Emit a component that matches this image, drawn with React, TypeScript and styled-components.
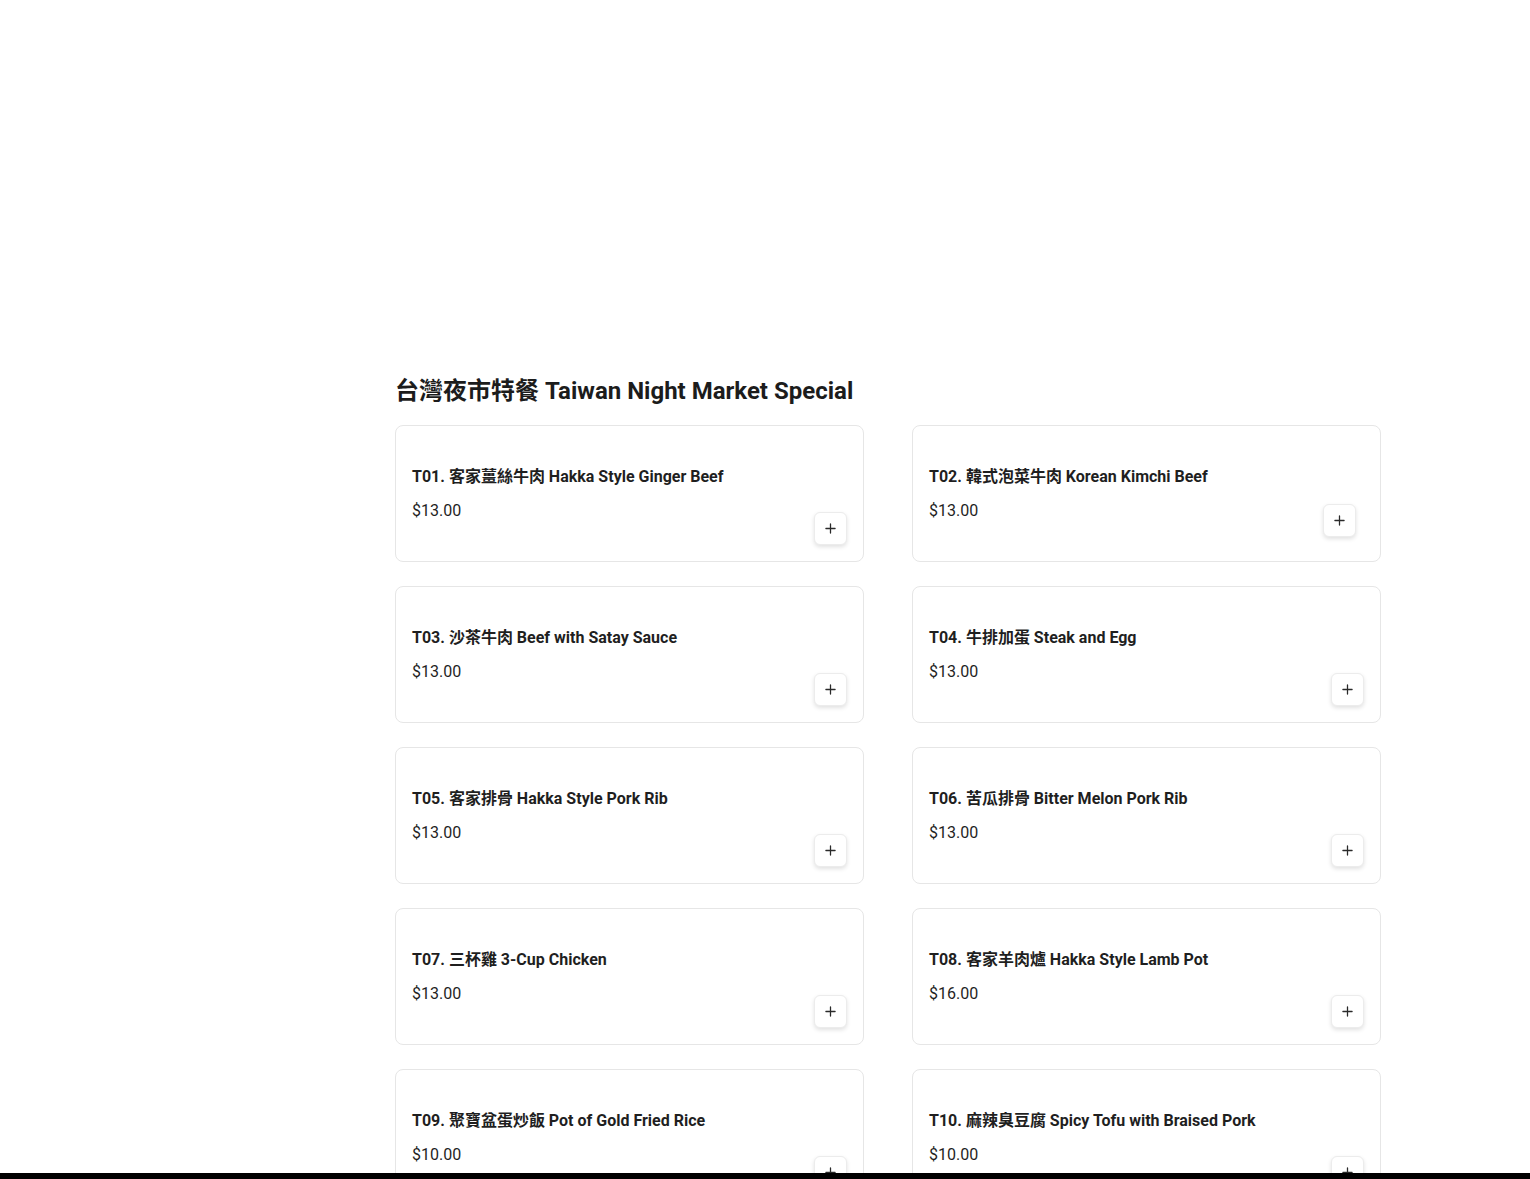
import React from 'react';
import styled, { createGlobalStyle, css } from 'styled-components';

const GlobalStyle = createGlobalStyle`
  * { box-sizing: border-box; }
  body {
    margin: 0;
    background: #ffffff;
    font-family: Roboto, "Noto Sans CJK TC", "Noto Sans", sans-serif;
    color: #1f1f1f;
  }
`;

type Dish = { code: string; zh: string; en: string; price: string; lifted?: boolean };

const dishes: Dish[] = [
  { code: 'T01', zh: '客家薑絲牛肉', en: 'Hakka Style Ginger Beef', price: '$13.00' },
  { code: 'T02', zh: '韓式泡菜牛肉', en: 'Korean Kimchi Beef', price: '$13.00', lifted: true },
  { code: 'T03', zh: '沙茶牛肉', en: 'Beef with Satay Sauce', price: '$13.00' },
  { code: 'T04', zh: '牛排加蛋', en: 'Steak and Egg', price: '$13.00' },
  { code: 'T05', zh: '客家排骨', en: 'Hakka Style Pork Rib', price: '$13.00' },
  { code: 'T06', zh: '苦瓜排骨', en: 'Bitter Melon Pork Rib', price: '$13.00' },
  { code: 'T07', zh: '三杯雞', en: '3-Cup Chicken', price: '$13.00' },
  { code: 'T08', zh: '客家羊肉爐', en: 'Hakka Style Lamb Pot', price: '$16.00' },
  { code: 'T09', zh: '聚寶盆蛋炒飯', en: 'Pot of Gold Fried Rice', price: '$10.00' },
  { code: 'T10', zh: '麻辣臭豆腐', en: 'Spicy Tofu with Braised Pork', price: '$10.00' },
];

const PlusIcon = () => (
  <svg width="11" height="11" viewBox="0 0 12 12" fill="none">
    <path d="M6 1v10M1 6h10" stroke="#2a2a2a" strokeWidth="1.4" strokeLinecap="round" />
  </svg>
);

const App = () => {
  return (
    <>
      <GlobalStyle />
      <Page>
        <Hero />
        <Section>
          <SectionTitle>台灣夜市特餐 Taiwan Night Market Special</SectionTitle>
          <DishGrid>
            {dishes.map(dish => (
              <DishCard key={dish.code}>
                <DishInfo>
                  <DishName>{`${dish.code}. ${dish.zh} ${dish.en}`}</DishName>
                  <DishPrice>{dish.price}</DishPrice>
                </DishInfo>
                <DishMedia>
                  <AddButton $lifted={dish.lifted} aria-label={`Add ${dish.en}`}>
                    <PlusIcon />
                  </AddButton>
                </DishMedia>
              </DishCard>
            ))}
          </DishGrid>
        </Section>
      </Page>
      <CartBar />
    </>
  );
};

export default App;

const Page = styled.div`
  min-height: 100vh;
  padding-bottom: 40px;
`;

const Hero = styled.div`
  height: 375px;
`;

const Section = styled.section`
  width: 986px;
  margin-left: 395px;
`;

const SectionTitle = styled.h2`
  margin: 0 0 18px;
  font-size: 24px;
  line-height: 32px;
  font-weight: 700;
  color: #1c1c1c;
`;

const DishGrid = styled.div`
  display: grid;
  grid-template-columns: 1fr 1fr;
  column-gap: 48px;
  row-gap: 24px;
`;

const DishCard = styled.div`
  display: flex;
  align-items: center;
  justify-content: space-between;
  height: 137px;
  padding: 16px;
  border: 1px solid #e6e6e6;
  border-radius: 8px;
  background: #ffffff;
`;

const DishInfo = styled.div`
  display: flex;
  flex-direction: column;
  gap: 10px;
  min-width: 0;
`;

const DishName = styled.div`
  font-size: 16px;
  line-height: 24px;
  font-weight: 700;
  color: #1f1f1f;
  white-space: nowrap;
`;

const DishPrice = styled.div`
  font-size: 16px;
  line-height: 24px;
  font-weight: 400;
  color: #1f1f1f;
`;

const DishMedia = styled.div`
  position: relative;
  flex: none;
  width: 103px;
  height: 103px;
`;

const AddButton = styled.button<{ $lifted?: boolean }>`
  position: absolute;
  right: 0;
  bottom: 0;
  width: 33px;
  height: 33px;
  display: flex;
  align-items: center;
  justify-content: center;
  padding: 0;
  background: #ffffff;
  border: 1px solid #ececec;
  border-radius: 6px;
  box-shadow: 0 2px 4px rgba(0, 0, 0, 0.12);
  cursor: pointer;
  ${p =>
    p.$lifted &&
    css`
      transform: translate(-8px, -8px);
    `}
`;

const CartBar = styled.div`
  position: fixed;
  left: 0;
  right: 0;
  bottom: 0;
  height: 6px;
  background: #000000;
`;
